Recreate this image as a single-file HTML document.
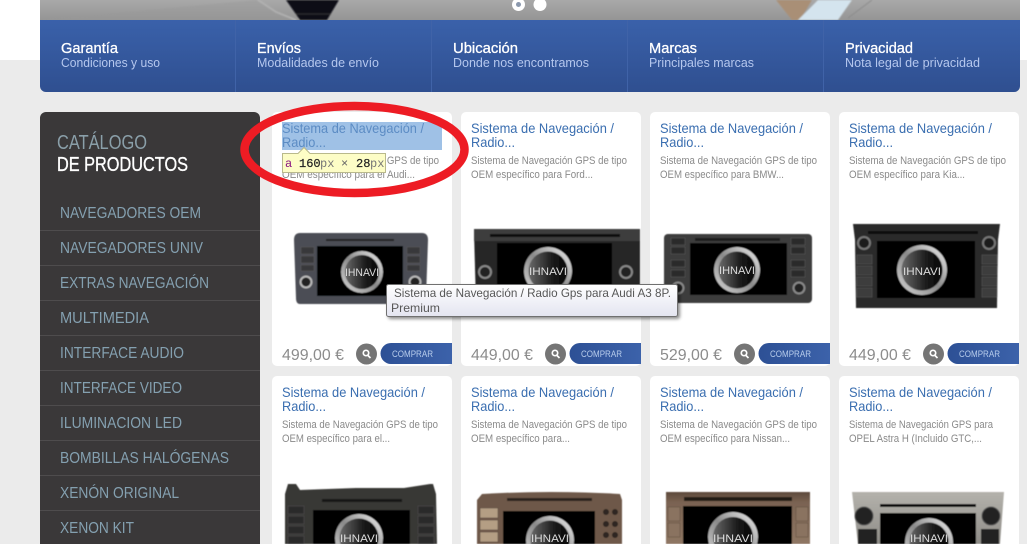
<!DOCTYPE html>
<html lang="es"><head><meta charset="utf-8"><title>Catálogo</title>
<style>
html,body{margin:0;padding:0;width:1027px;height:544px;overflow:hidden;background:#fff}
svg{display:block}
text{font-family:"Liberation Sans",sans-serif}
.nt{font-size:15px;fill:#fff;stroke:#fff;stroke-width:.3}
.ns{font-size:12.500px;fill:#b5c7ee}
.m{font-size:15.500px;fill:#84a0b0}
.t{font-size:14px;fill:#3a6eb0}
.d{font-size:11px;fill:#8a8a8a}
.p{font-size:16px;fill:#8c8c8c}
.c{font-size:9.500px;fill:#b8cdec}
.v{font-size:11px;fill:#ddd;text-anchor:middle}
.ms{font-family:"Liberation Mono",monospace;font-size:12px}
</style></head><body>
<svg xmlns="http://www.w3.org/2000/svg" width="1027" height="544" viewBox="0 0 1027 544">
<defs>
<linearGradient id="nav" x1="0" y1="0" x2="0" y2="1"><stop offset="0" stop-color="#3a61aa"/><stop offset="1" stop-color="#2f4f90"/></linearGradient>
<linearGradient id="hero" x1="0" y1="0" x2="0" y2="1"><stop offset="0" stop-color="#a9a9a9"/><stop offset="1" stop-color="#959595"/></linearGradient>
<linearGradient id="btn" x1="0" y1="0" x2="1" y2="0"><stop offset="0" stop-color="#2d5095"/><stop offset="1" stop-color="#3c62aa"/></linearGradient>
<linearGradient id="ring" x1="1" y1="0" x2="0" y2="1"><stop offset="0" stop-color="#f2f2f2"/><stop offset=".5" stop-color="#8a8a8a"/><stop offset="1" stop-color="#d8d8d8"/></linearGradient>
<linearGradient id="disc" x1="0" y1="0" x2="1" y2="0"><stop offset="0" stop-color="#6a6a6a"/><stop offset=".6" stop-color="#1c1c1c"/><stop offset="1" stop-color="#050505"/></linearGradient>
<linearGradient id="tip" x1="0" y1="0" x2="0" y2="1"><stop offset="0" stop-color="#fff"/><stop offset="1" stop-color="#e3e4f0"/></linearGradient>
<linearGradient id="silver" x1="0" y1="0" x2="0" y2="1"><stop offset="0" stop-color="#b4b2ac"/><stop offset="1" stop-color="#8e8c87"/></linearGradient>
<linearGradient id="bronze" x1="0" y1="0" x2="0" y2="1"><stop offset="0" stop-color="#5e4a3c"/><stop offset=".2" stop-color="#7a6352"/><stop offset="1" stop-color="#8f7764"/></linearGradient>
<filter id="soft" x="-5%" y="-5%" width="110%" height="110%"><feGaussianBlur stdDeviation=".5"/></filter>
<filter id="soft2" x="-5%" y="-20%" width="110%" height="140%"><feGaussianBlur stdDeviation=".8"/></filter>
<filter id="sh" x="-5%" y="-20%" width="110%" height="150%"><feDropShadow dx="2" dy="2" stdDeviation="1.5" flood-color="#000" flood-opacity=".45"/></filter>
</defs>

<!-- page -->
<rect x="0" y="60" width="1027" height="484" fill="#ebebeb"/>

<!-- hero strip -->
<rect x="40" y="0" width="980" height="20" fill="url(#hero)"/>
<g filter="url(#soft2)">
<path d="M256 0 L276 12 L300 20 L40 20 Z" fill="#999" opacity=".4"/>
<path d="M286 0 L339 0 L327 20 L300 20 Z" fill="#0e0e12"/>
<path d="M296 14 L331 14" stroke="#333" stroke-width="1"/>
<path d="M258 0 L276 12 L296 20" stroke="#b4b4b4" stroke-width="1.500" fill="none"/>
<path d="M776 0 L792 20 L800 20 L812 0 Z" fill="#a98f76"/>
<path d="M818 0 L798 20 L838 20 L852 0 Z" fill="#d4e4ee"/>
<path d="M872 0 L848 18" stroke="#8a8a8a" stroke-width="1" fill="none"/>
</g>
<circle cx="518.500" cy="4.500" r="6.500" fill="#fff"/><circle cx="518.500" cy="4.500" r="2.500" fill="#8b98ad"/>
<circle cx="540" cy="4.500" r="6.500" fill="#fff"/>

<!-- nav bar -->
<path d="M40 20H1020V86a6 6 0 0 1-6 6H46a6 6 0 0 1-6-6Z" fill="url(#nav)"/>
<g stroke="#4063a8" stroke-width="1"><path d="M235.500 20V92M431.500 20V92M627.500 20V92M823.500 20V92"/></g>
<text class="nt" x="61" y="53" textLength="57" lengthAdjust="spacingAndGlyphs">Garantía</text>
<text class="ns" x="61" y="67" textLength="99" lengthAdjust="spacingAndGlyphs">Condiciones y uso</text>
<text class="nt" x="257" y="53" textLength="44" lengthAdjust="spacingAndGlyphs">Envíos</text>
<text class="ns" x="257" y="67" textLength="122" lengthAdjust="spacingAndGlyphs">Modalidades de envío</text>
<text class="nt" x="453" y="53" textLength="65" lengthAdjust="spacingAndGlyphs">Ubicación</text>
<text class="ns" x="453" y="67" textLength="136" lengthAdjust="spacingAndGlyphs">Donde nos encontramos</text>
<text class="nt" x="649" y="53" textLength="48" lengthAdjust="spacingAndGlyphs">Marcas</text>
<text class="ns" x="649" y="67" textLength="105" lengthAdjust="spacingAndGlyphs">Principales marcas</text>
<text class="nt" x="845" y="53" textLength="68" lengthAdjust="spacingAndGlyphs">Privacidad</text>
<text class="ns" x="845" y="67" textLength="135" lengthAdjust="spacingAndGlyphs">Nota legal de privacidad</text>

<!-- sidebar -->
<path d="M40 118a6 6 0 0 1 6-6H254a6 6 0 0 1 6 6V544H40Z" fill="#3a3839"/>
<text x="57" y="149" font-size="20" fill="#8a9fa9" textLength="90" lengthAdjust="spacingAndGlyphs">CATÁLOGO</text>
<text x="57" y="171" font-size="20" fill="#fff" stroke="#fff" stroke-width=".35" textLength="131" lengthAdjust="spacingAndGlyphs">DE PRODUCTOS</text>
<g stroke="#4e4c4d" stroke-width="1"><path d="M40 230.500H260M40 265.500H260M40 300.500H260M40 335.500H260M40 370.500H260M40 405.500H260M40 440.500H260M40 475.500H260M40 510.500H260"/></g>
<text class="m" x="60" y="218" textLength="141" lengthAdjust="spacingAndGlyphs">NAVEGADORES OEM</text>
<text class="m" x="60" y="253" textLength="143" lengthAdjust="spacingAndGlyphs">NAVEGADORES UNIV</text>
<text class="m" x="60" y="288" textLength="149" lengthAdjust="spacingAndGlyphs">EXTRAS NAVEGACIÓN</text>
<text class="m" x="60" y="323" textLength="89" lengthAdjust="spacingAndGlyphs">MULTIMEDIA</text>
<text class="m" x="60" y="358" textLength="124" lengthAdjust="spacingAndGlyphs">INTERFACE AUDIO</text>
<text class="m" x="60" y="393" textLength="122" lengthAdjust="spacingAndGlyphs">INTERFACE VIDEO</text>
<text class="m" x="60" y="428" textLength="122" lengthAdjust="spacingAndGlyphs">ILUMINACION LED</text>
<text class="m" x="60" y="463" textLength="169" lengthAdjust="spacingAndGlyphs">BOMBILLAS HALÓGENAS</text>
<text class="m" x="60" y="498" textLength="119" lengthAdjust="spacingAndGlyphs">XENÓN ORIGINAL</text>
<text class="m" x="60" y="533" textLength="74" lengthAdjust="spacingAndGlyphs">XENON KIT</text>

<!-- cards -->
<g fill="#fff">
<rect x="272" y="112" width="180" height="254" rx="5"/><rect x="461" y="112" width="180" height="254" rx="5"/><rect x="650" y="112" width="180" height="254" rx="5"/><rect x="839" y="112" width="180" height="254" rx="5"/>
<rect x="272" y="376" width="180" height="180" rx="5"/><rect x="461" y="376" width="180" height="180" rx="5"/><rect x="650" y="376" width="180" height="180" rx="5"/><rect x="839" y="376" width="180" height="180" rx="5"/>
</g>

<!-- highlight -->
<rect x="282" y="122" width="160" height="28" fill="#9fc1e6"/>

<!-- titles -->
<text class="t" x="282" y="133" textLength="142" lengthAdjust="spacingAndGlyphs" style="fill:#5c8cc4">Sistema de Navegación /</text>
<text class="t" x="282" y="147" textLength="44" lengthAdjust="spacingAndGlyphs" style="fill:#5c8cc4">Radio...</text>
<text class="t" x="471" y="133" textLength="143" lengthAdjust="spacingAndGlyphs">Sistema de Navegación /</text>
<text class="t" x="471" y="147" textLength="44" lengthAdjust="spacingAndGlyphs">Radio...</text>
<text class="t" x="660" y="133" textLength="143" lengthAdjust="spacingAndGlyphs">Sistema de Navegación /</text>
<text class="t" x="660" y="147" textLength="44" lengthAdjust="spacingAndGlyphs">Radio...</text>
<text class="t" x="849" y="133" textLength="143" lengthAdjust="spacingAndGlyphs">Sistema de Navegación /</text>
<text class="t" x="849" y="147" textLength="44" lengthAdjust="spacingAndGlyphs">Radio...</text>
<text class="t" x="282" y="397" textLength="143" lengthAdjust="spacingAndGlyphs">Sistema de Navegación /</text>
<text class="t" x="282" y="411" textLength="44" lengthAdjust="spacingAndGlyphs">Radio...</text>
<text class="t" x="471" y="397" textLength="143" lengthAdjust="spacingAndGlyphs">Sistema de Navegación /</text>
<text class="t" x="471" y="411" textLength="44" lengthAdjust="spacingAndGlyphs">Radio...</text>
<text class="t" x="660" y="397" textLength="143" lengthAdjust="spacingAndGlyphs">Sistema de Navegación /</text>
<text class="t" x="660" y="411" textLength="44" lengthAdjust="spacingAndGlyphs">Radio...</text>
<text class="t" x="849" y="397" textLength="143" lengthAdjust="spacingAndGlyphs">Sistema de Navegación /</text>
<text class="t" x="849" y="411" textLength="44" lengthAdjust="spacingAndGlyphs">Radio...</text>

<!-- descriptions -->
<text class="d" x="282" y="164" textLength="157" lengthAdjust="spacingAndGlyphs">Sistema de Navegación GPS de tipo</text>
<text class="d" x="282" y="178" textLength="133" lengthAdjust="spacingAndGlyphs">OEM específico para el Audi...</text>
<text class="d" x="471" y="164" textLength="156" lengthAdjust="spacingAndGlyphs">Sistema de Navegación GPS de tipo</text>
<text class="d" x="471" y="178" textLength="122" lengthAdjust="spacingAndGlyphs">OEM específico para Ford...</text>
<text class="d" x="660" y="164" textLength="157" lengthAdjust="spacingAndGlyphs">Sistema de Navegación GPS de tipo</text>
<text class="d" x="660" y="178" textLength="124" lengthAdjust="spacingAndGlyphs">OEM específico para BMW...</text>
<text class="d" x="849" y="164" textLength="157" lengthAdjust="spacingAndGlyphs">Sistema de Navegación GPS de tipo</text>
<text class="d" x="849" y="178" textLength="116" lengthAdjust="spacingAndGlyphs">OEM específico para Kia...</text>
<text class="d" x="282" y="428" textLength="156" lengthAdjust="spacingAndGlyphs">Sistema de Navegación GPS de tipo</text>
<text class="d" x="282" y="442" textLength="108" lengthAdjust="spacingAndGlyphs">OEM específico para el...</text>
<text class="d" x="471" y="428" textLength="156" lengthAdjust="spacingAndGlyphs">Sistema de Navegación GPS de tipo</text>
<text class="d" x="471" y="442" textLength="99" lengthAdjust="spacingAndGlyphs">OEM específico para...</text>
<text class="d" x="660" y="428" textLength="157" lengthAdjust="spacingAndGlyphs">Sistema de Navegación GPS de tipo</text>
<text class="d" x="660" y="442" textLength="130" lengthAdjust="spacingAndGlyphs">OEM específico para Nissan...</text>
<text class="d" x="849" y="428" textLength="144" lengthAdjust="spacingAndGlyphs">Sistema de Navegación GPS para</text>
<text class="d" x="849" y="442" textLength="133" lengthAdjust="spacingAndGlyphs">OPEL Astra H (Incluido GTC,...</text>

<!-- devices row 1 -->
<g filter="url(#soft)">
<!-- Audi -->
<path d="M300 233H422Q428 233 428 240L426 298Q426 304 420 304H300Q296 304 296 298L294 240Q294 233 300 233Z" fill="#4c4d54"/>
<rect x="317" y="246" width="86" height="50" fill="#050505"/>
<rect x="326" y="239" width="68" height="2" fill="#222"/>
<g fill="#37373b" stroke="#5c5c60" stroke-width=".5"><rect x="301" y="247" width="13" height="7"/><rect x="301" y="256" width="13" height="7"/><rect x="301" y="265" width="13" height="6"/><rect x="407" y="247" width="13" height="7"/><rect x="407" y="256" width="13" height="7"/><rect x="407" y="265" width="13" height="6"/></g>
<circle cx="306" cy="282" r="6.500" fill="#b8b8b8"/><circle cx="306" cy="282" r="4.500" fill="#222"/>
<circle cx="415" cy="282" r="6.500" fill="#b8b8b8"/><circle cx="415" cy="282" r="4.500" fill="#222"/>
<circle cx="362" cy="272" r="21" fill="url(#ring)"/><circle cx="362" cy="272" r="17" fill="url(#disc)"/>
<!-- Ford -->
<path d="M474 232Q474 229 478 229H636Q640 229 640 232V304H476Z" fill="#252525"/>
<rect x="474" y="229" width="166" height="12" fill="#3c3c3c"/>
<rect x="497" y="243" width="115" height="54" fill="#030303"/>
<rect x="490" y="234" width="130" height="3" fill="#111"/>
<circle cx="485" cy="272" r="7" fill="#888"/><circle cx="485" cy="272" r="5" fill="#222"/>
<circle cx="626" cy="272" r="7" fill="#888"/><circle cx="626" cy="272" r="5" fill="#222"/>
<circle cx="548" cy="271" r="24" fill="url(#ring)"/><circle cx="548" cy="271" r="19.500" fill="url(#disc)"/>
<!-- BMW -->
<rect x="664" y="234" width="148" height="69" rx="4" fill="#3c3c3c"/>
<rect x="690" y="243" width="97" height="52" fill="#040404"/>
<rect x="695" y="238" width="85" height="3" fill="#1c1c1c"/>
<g fill="#2a2a2a" stroke="#5c5c5c" stroke-width=".5"><rect x="671" y="238" width="14" height="7"/><rect x="671" y="247" width="14" height="7"/><rect x="671" y="260" width="14" height="7"/><rect x="671" y="270" width="14" height="7"/><rect x="791" y="238" width="14" height="7"/><rect x="791" y="247" width="14" height="7"/><rect x="791" y="260" width="14" height="7"/><rect x="791" y="270" width="14" height="7"/></g>
<circle cx="678" cy="288" r="6.500" fill="#888"/><circle cx="678" cy="288" r="4.500" fill="#222"/>
<circle cx="799" cy="288" r="6.500" fill="#888"/><circle cx="799" cy="288" r="4.500" fill="#222"/>
<circle cx="737" cy="270" r="23" fill="url(#ring)"/><circle cx="737" cy="270" r="18.500" fill="url(#disc)"/>
<!-- Kia -->
<path d="M853 224H1000L998 240L997 308H856L855 240Z" fill="#2c2c2c"/>
<rect x="877" y="241" width="98" height="57" fill="#040404"/>
<rect x="868" y="231" width="110" height="3" fill="#0c0c0c"/>
<circle cx="864" cy="243" r="7" fill="#777"/><circle cx="864" cy="243" r="5" fill="#1c1c1c"/>
<circle cx="989" cy="243" r="7" fill="#777"/><circle cx="989" cy="243" r="5" fill="#1c1c1c"/>
<g fill="#3c3c3c" stroke="#5c5c5c" stroke-width=".5"><rect x="857" y="255" width="15" height="9"/><rect x="857" y="266" width="15" height="9"/><rect x="857" y="277" width="15" height="9"/><rect x="857" y="288" width="15" height="9"/><rect x="982" y="255" width="15" height="9"/><rect x="982" y="266" width="15" height="9"/><rect x="982" y="277" width="15" height="9"/><rect x="982" y="288" width="15" height="9"/></g>
<circle cx="922" cy="270" r="25" fill="url(#ring)"/><circle cx="922" cy="270" r="20.500" fill="url(#disc)"/>
</g>
<text class="v" x="362" y="276" textLength="34" lengthAdjust="spacingAndGlyphs">IHNAVI</text>
<text class="v" x="548" y="275" textLength="38" lengthAdjust="spacingAndGlyphs">IHNAVI</text>
<text class="v" x="737" y="274" textLength="36" lengthAdjust="spacingAndGlyphs">IHNAVI</text>
<text class="v" x="922" y="275" textLength="38" lengthAdjust="spacingAndGlyphs" font-size="13">IHNAVI</text>

<!-- devices row 2 -->
<g filter="url(#soft)">
<path d="M288 484H296L300 490L356 488H368L404 488L430 484H433L436 494L437 544H285L285 494Z" fill="#383735"/>
<rect x="313" y="510" width="97" height="34" fill="#040404"/>
<rect x="322" y="499" width="80" height="3" fill="#141414"/>
<g fill="#2a2a2a" stroke="#555" stroke-width=".5"><rect x="288" y="506" width="16" height="8"/><rect x="288" y="516" width="16" height="8"/><rect x="288" y="526" width="16" height="8"/><rect x="288" y="536" width="16" height="8"/><rect x="418" y="506" width="16" height="8"/><rect x="418" y="516" width="16" height="8"/><rect x="418" y="526" width="16" height="8"/><rect x="418" y="536" width="16" height="8"/></g>
<circle cx="359" cy="538" r="24" fill="url(#ring)"/><circle cx="359" cy="538" r="19.500" fill="url(#disc)"/>

<path d="M482 494Q550 490 620 494L622 500L622 544H477V500Z" fill="#6e5848"/>
<rect x="503" y="511" width="92" height="33" fill="#040404"/>
<rect x="507" y="498" width="85" height="3" fill="#2c241e"/>
<g fill="#b49e84" stroke="#52443a" stroke-width=".5"><rect x="480" y="508" width="18" height="10"/><rect x="480" y="520" width="18" height="10"/><rect x="480" y="532" width="18" height="10"/></g>
<g fill="#2e2620"><circle cx="606" cy="512" r="3"/><circle cx="615" cy="512" r="3"/><circle cx="606" cy="524" r="3"/><circle cx="615" cy="524" r="3"/><circle cx="606" cy="535" r="3"/><circle cx="615" cy="535" r="3"/></g>
<circle cx="550" cy="540" r="24" fill="url(#ring)"/><circle cx="550" cy="540" r="19.500" fill="url(#disc)"/>

<rect x="666" y="492" width="144" height="52" fill="url(#bronze)"/>
<rect x="683" y="506" width="109" height="38" fill="#040404"/>
<rect x="684" y="497" width="108" height="4" fill="#241e18"/>
<g fill="#8a7361" stroke="#5c4a3c" stroke-width=".5"><rect x="668" y="507" width="12" height="14"/><rect x="668" y="523" width="12" height="14"/><rect x="796" y="507" width="12" height="14"/><rect x="796" y="523" width="12" height="14"/></g>
<circle cx="733" cy="537" r="25" fill="url(#ring)"/><circle cx="733" cy="537" r="20" fill="url(#disc)"/>

<path d="M852 492H1004L1000 544H858Z" fill="url(#silver)"/>
<rect x="880" y="504" width="96" height="3" fill="#111"/>
<rect x="880" y="513" width="96" height="31" fill="#040404"/>
<circle cx="864" cy="516" r="9" fill="#222" stroke="#555"/>
<circle cx="991" cy="516" r="9" fill="#222" stroke="#555"/>
<rect x="858" y="529" width="19" height="15" fill="#222"/><rect x="981" y="529" width="18" height="15" fill="#222"/>
<circle cx="929" cy="542" r="24" fill="url(#ring)"/><circle cx="929" cy="542" r="19.500" fill="url(#disc)"/>
</g>
<text class="v" x="359" y="542" textLength="38" lengthAdjust="spacingAndGlyphs" font-size="12">IHNAVI</text>
<text class="v" x="550" y="542" textLength="38" lengthAdjust="spacingAndGlyphs" font-size="12">IHNAVI</text>
<text class="v" x="733" y="542" textLength="40" lengthAdjust="spacingAndGlyphs" font-size="13">IHNAVI</text>
<text class="v" x="929" y="542" textLength="38" lengthAdjust="spacingAndGlyphs" font-size="12">IHNAVI</text>

<!-- footers -->
<text class="p" x="282" y="360" textLength="62" lengthAdjust="spacingAndGlyphs">499,00 €</text>
<text class="p" x="471" y="360" textLength="62" lengthAdjust="spacingAndGlyphs">449,00 €</text>
<text class="p" x="660" y="360" textLength="62" lengthAdjust="spacingAndGlyphs">529,00 €</text>
<text class="p" x="849" y="360" textLength="62" lengthAdjust="spacingAndGlyphs">449,00 €</text>
<g fill="#757575"><circle cx="366.500" cy="354" r="10.500"/><circle cx="555.500" cy="354" r="10.500"/><circle cx="744.500" cy="354" r="10.500"/><circle cx="933.500" cy="354" r="10.500"/></g>
<g fill="none" stroke="#fff" stroke-width="1.700"><path d="M368 355.500l2.500 2.500"/><circle cx="366" cy="353" r="2.700"/><path d="M557 355.500l2.500 2.500"/><circle cx="555" cy="353" r="2.700"/><path d="M746 355.500l2.500 2.500"/><circle cx="744" cy="353" r="2.700"/><path d="M935 355.500l2.500 2.500"/><circle cx="933" cy="353" r="2.700"/></g>
<g fill="url(#btn)">
<path d="M452 343H391a10.500 10.500 0 0 0 0 21H452Z"/>
<path d="M641 343H580a10.500 10.500 0 0 0 0 21H641Z"/>
<path d="M830 343H769a10.500 10.500 0 0 0 0 21H830Z"/>
<path d="M1019 343H958a10.500 10.500 0 0 0 0 21H1019Z"/>
</g>
<text class="c" x="392" y="357" textLength="41" lengthAdjust="spacingAndGlyphs">COMPRAR</text>
<text class="c" x="581" y="357" textLength="41" lengthAdjust="spacingAndGlyphs">COMPRAR</text>
<text class="c" x="770" y="357" textLength="41" lengthAdjust="spacingAndGlyphs">COMPRAR</text>
<text class="c" x="959" y="357" textLength="41" lengthAdjust="spacingAndGlyphs">COMPRAR</text>

<!-- dimension tooltip -->
<path d="M282.500 153.500H298L304 147.500L310 153.500H385.500V172.500H282.500Z" fill="#fdfdc6" stroke="#b9b98c"/>
<text class="ms" x="285" y="167" fill="#881280">a</text>
<text class="ms" x="299" y="167" fill="#222" stroke="#222" stroke-width=".2">160</text>
<text class="ms" x="320" y="167" fill="#777">px</text>
<text class="ms" x="341" y="167" fill="#666">×</text>
<text class="ms" x="356" y="167" fill="#222" stroke="#222" stroke-width=".2">28</text>
<text class="ms" x="370" y="167" fill="#777">px</text>

<!-- red ellipse -->
<ellipse cx="354.500" cy="149.500" rx="110" ry="43.500" fill="none" stroke="#ed1c24" stroke-width="8.500"/>

<!-- browser tooltip -->
<rect x="386.500" y="284.500" width="291" height="32" rx="2" fill="url(#tip)" stroke="#6f6f6f" filter="url(#sh)"/>
<text x="394" y="297" font-size="12" fill="#575757" textLength="277" lengthAdjust="spacingAndGlyphs">Sistema de Navegación / Radio Gps para Audi A3 8P.</text>
<text x="391" y="312" font-size="12" fill="#575757" textLength="49" lengthAdjust="spacingAndGlyphs">Premium</text>
</svg>
</body></html>
